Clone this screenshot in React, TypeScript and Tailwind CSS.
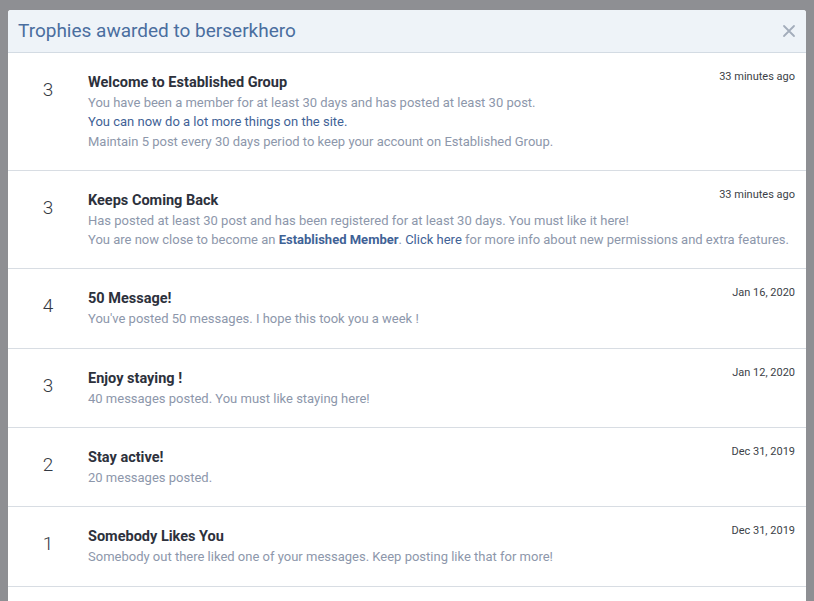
const TROPHIES = [
  {
    points: 3,
    title: "Welcome to Established Group",
    date: "33 minutes ago",
    lines: [
      <>You have been a member for at least 30 days and has posted at least 30 post.</>,
      <span className="text-[#3f6296]">You can now do a lot more things on the site.</span>,
      <>Maintain 5 post every 30 days period to keep your account on Established Group.</>,
    ],
  },
  {
    points: 3,
    title: "Keeps Coming Back",
    date: "33 minutes ago",
    lines: [
      <>Has posted at least 30 post and has been registered for at least 30 days. You must like it here!</>,
      <>
        You are now close to become an{" "}
        <b className="font-bold text-[#3f6296]">Established Member</b>.{" "}
        <span className="text-[#3f6296]">Click here</span> for more info about new permissions and extra features.
      </>,
    ],
  },
  {
    points: 4,
    title: "50 Message!",
    date: "Jan 16, 2020",
    lines: [<>You've posted 50 messages. I hope this took you a week !</>],
  },
  {
    points: 3,
    title: "Enjoy staying !",
    date: "Jan 12, 2020",
    lines: [<>40 messages posted. You must like staying here!</>],
  },
  {
    points: 2,
    title: "Stay active!",
    date: "Dec 31, 2019",
    lines: [<>20 messages posted.</>],
  },
  {
    points: 1,
    title: "Somebody Likes You",
    date: "Dec 31, 2019",
    lines: [<>Somebody out there liked one of your messages. Keep posting like that for more!</>],
  },
];

export default function App() {
  return (
    <div
      className="h-[601px] w-[814px] overflow-hidden bg-[#8e8f93] px-[8px] pt-[10px]"
      style={{ fontFamily: "Roboto, 'Liberation Sans', sans-serif" }}
    >
      <div className="overflow-hidden rounded-t-[3px] bg-white">
        {/* Header */}
        <div className="flex h-[43px] items-center justify-between border-b border-[#d3dbe3] bg-[#eef3f8] pl-[10px] pr-[10px]">
          <h2 className="text-[19px] text-[#4a6e9f]">Trophies awarded to berserkhero</h2>
          <svg width="14" height="14" viewBox="0 0 14 14" className="text-[#a3adbb]">
            <path d="M2 2 L12 12 M12 2 L2 12" stroke="currentColor" strokeWidth="1.8" strokeLinecap="round" />
          </svg>
        </div>

        {/* Rows */}
        {TROPHIES.map((t, i) => (
          <div key={i} className="flex border-b border-[#d8dde3] pt-[20px] pb-[19px] pr-[11px]">
            <div className="w-[80px] shrink-0 pt-[7px] text-center text-[19px] leading-none font-light text-[#333842]">
              {t.points}
            </div>
            <div className="min-w-0 flex-1">
              <div className="flex items-start justify-between gap-4">
                <h3 className="text-[14.5px] leading-[20px] font-bold text-[#2d313c]">{t.title}</h3>
                <span className="-mt-[3px] text-[11px] leading-[14px] whitespace-nowrap text-[#3b3f47]">{t.date}</span>
              </div>
              {t.lines.map((line, j) => (
                <p key={j} className="text-[13px] leading-[19.3px] whitespace-nowrap text-[#8d97ab]">
                  {line}
                </p>
              ))}
            </div>
          </div>
        ))}
        <div className="h-[40px]" />
      </div>
    </div>
  );
}
